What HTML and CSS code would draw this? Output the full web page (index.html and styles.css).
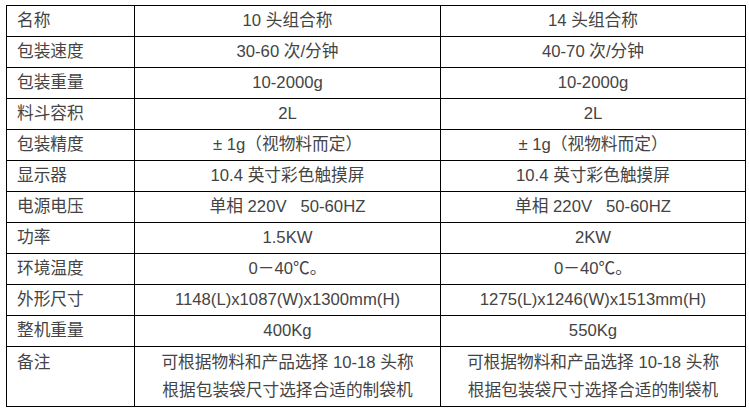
FILE: index.html
```html
<!DOCTYPE html>
<html lang="zh">
<head>
<meta charset="utf-8">
<link rel="stylesheet" href="styles.css">
</head>
<body>
<table class="spec">
  <colgroup><col class="c1"><col class="c2"><col class="c3"></colgroup>
  <tr><td class="label">名称</td><td>10 头组合称</td><td>14 头组合称</td></tr>
  <tr><td class="label">包装速度</td><td>30-60 次/分钟</td><td>40-70 次/分钟</td></tr>
  <tr><td class="label">包装重量</td><td>10-2000g</td><td>10-2000g</td></tr>
  <tr><td class="label">料斗容积</td><td>2L</td><td>2L</td></tr>
  <tr><td class="label">包装精度</td><td>± 1g（视物料而定）</td><td>± 1g（视物料而定）</td></tr>
  <tr><td class="label">显示器</td><td>10.4 英寸彩色触摸屏</td><td>10.4 英寸彩色触摸屏</td></tr>
  <tr><td class="label">电源电压</td><td>单相 220V&nbsp;&nbsp; 50-60HZ</td><td>单相 220V&nbsp;&nbsp; 50-60HZ</td></tr>
  <tr><td class="label">功率</td><td>1.5KW</td><td>2KW</td></tr>
  <tr><td class="label">环境温度</td><td>0－40℃。</td><td>0－40℃。</td></tr>
  <tr><td class="label">外形尺寸</td><td>1148(L)x1087(W)x1300mm(H)</td><td>1275(L)x1246(W)x1513mm(H)</td></tr>
  <tr><td class="label">整机重量</td><td>400Kg</td><td>550Kg</td></tr>
  <tr class="notes"><td class="label">备注</td><td>可根据物料和产品选择 10-18 头称<br>根据包装袋尺寸选择合适的制袋机</td><td>可根据物料和产品选择 10-18 头称<br>根据包装袋尺寸选择合适的制袋机</td></tr>
</table>
</body>
</html>
```
FILE: styles.css
```css
html, body {
  margin: 0;
  padding: 0;
  background: #fff;
}
body {
  padding: 5px 0 0 6px;
}
.spec {
  border-collapse: collapse;
  table-layout: fixed;
  width: 739px;
  font-family: "Liberation Sans", Arial, "Noto Sans CJK SC", sans-serif;
  font-size: 16.7px;
  color: #444;
}
.c1 { width: 128px; }
.c2 { width: 306px; }
.c3 { width: 305px; }
.spec td {
  border: 1px solid #000;
  height: 30px;
  padding: 0;
  text-align: center;
  vertical-align: middle;
  line-height: 20px;
  white-space: nowrap;
}
.spec td.label {
  text-align: left;
  padding-left: 10px;
}
.spec tr.notes td {
  height: 60px;
  vertical-align: top;
  line-height: 28px;
  padding-top: 2px;
  box-sizing: border-box;
}
```
